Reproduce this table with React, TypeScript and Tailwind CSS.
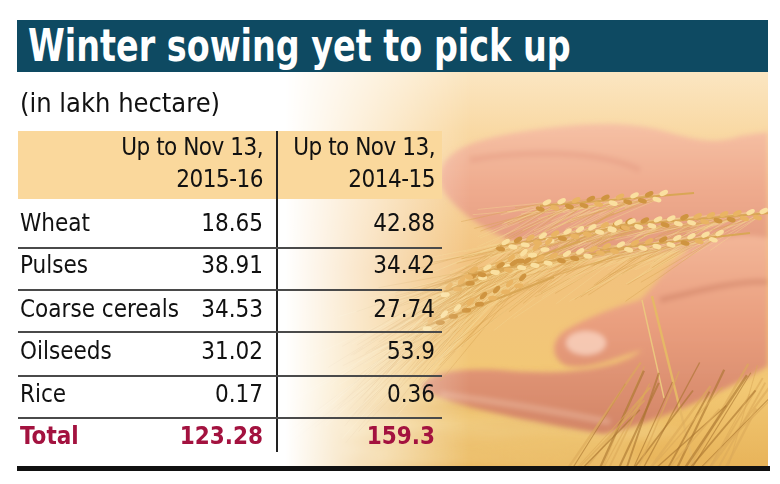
import React from 'react';

type Row = { crop: string; now: string; prev: string; h: string; pb: string };

const ROWS: Row[] = [
  { crop: 'Wheat', now: '18.65', prev: '42.88', h: 'h-[48px]', pb: 'pb-0' },
  { crop: 'Pulses', now: '38.91', prev: '34.42', h: 'h-[42px]', pb: 'pb-2' },
  { crop: 'Coarse cereals', now: '34.53', prev: '27.74', h: 'h-[42px]', pb: 'pb-1' },
  { crop: 'Oilseeds', now: '31.02', prev: '53.9', h: 'h-[44px]', pb: 'pb-[6px]' },
  { crop: 'Rice', now: '0.17', prev: '0.36', h: 'h-[42px]', pb: 'pb-[6px]' },
];

// small deterministic random so the wheat looks the same every run
function makeRand(seed: number) {
  let s = seed;
  return () => {
    s = (s * 16807) % 2147483647;
    return (s - 1) / 2147483646;
  };
}

type Ear = { tx: number; ty: number; bx: number; by: number; n: number; awn: number };

const EARS: Ear[] = [
  { tx: 500, ty: 246, bx: 630, by: 224, n: 22, awn: 90 },
  { tx: 612, ty: 226, bx: 764, by: 214, n: 24, awn: 70 },
  { tx: 444, ty: 292, bx: 550, by: 244, n: 18, awn: 130 },
  { tx: 426, ty: 326, bx: 524, by: 280, n: 16, awn: 140 },
  { tx: 468, ty: 274, bx: 594, by: 252, n: 20, awn: 120 },
  { tx: 540, ty: 206, bx: 664, by: 196, n: 18, awn: 80 },
  { tx: 600, ty: 250, bx: 720, by: 236, n: 18, awn: 90 },
];

function WheatPhoto() {
  const rnd = makeRand(11);
  const grains: React.ReactNode[] = [];
  const awns: React.ReactNode[] = [];

  EARS.forEach((e, ei) => {
    const dx = e.bx - e.tx;
    const dy = e.by - e.ty;
    const len = Math.hypot(dx, dy);
    const ux = dx / len;
    const uy = dy / len;
    const ang = (Math.atan2(dy, dx) * 180) / Math.PI;
    grains.push(
      <line key={`st${ei}`} x1={e.tx} y1={e.ty} x2={e.bx + 30} y2={e.by - 3} stroke="#d9a655" strokeWidth={2} />,
    );
    for (let i = 0; i < e.n; i++) {
      const t = i / (e.n - 1);
      const side = i % 2 === 0 ? 1 : -1;
      const cx = e.tx + dx * t - uy * side * 3;
      const cy = e.ty + dy * t + ux * side * 3;
      // awns run towards the lower left, away from the stalk
      for (let k = 0; k < 4; k++) {
        const l = e.awn * (0.4 + rnd() * 0.8);
        const spread = (rnd() - 0.5) * 0.6;
        const ax = cx - (ux * Math.cos(spread) - uy * Math.sin(spread)) * l;
        const ay = cy - (uy * Math.cos(spread) + ux * Math.sin(spread)) * l + l * 0.3;
        awns.push(
          <line
            key={`a${ei}-${i}-${k}`}
            x1={cx}
            y1={cy}
            x2={ax}
            y2={ay}
            stroke={rnd() > 0.45 ? '#f3d592' : '#d8a454'}
            strokeWidth={0.6}
            opacity={0.75}
          />,
        );
      }
      const tone = rnd();
      const fill = tone > 0.6 ? '#fae0a0' : tone > 0.3 ? '#e9b463' : '#cf943f';
      grains.push(
        <ellipse
          key={`g${ei}-${i}`}
          cx={cx}
          cy={cy}
          rx={4.6}
          ry={2.4}
          fill={fill}
          transform={`rotate(${ang + side * 22} ${cx} ${cy})`}
        />,
      );
    }
  });

  const straws: React.ReactNode[] = [];
  for (let i = 0; i < 34; i++) {
    const x = 620 + rnd() * 160;
    const top = 360 + rnd() * 50;
    straws.push(
      <line
        key={`s${i}`}
        x1={x}
        y1={top}
        x2={x - 30 - rnd() * 50}
        y2={470}
        stroke={rnd() > 0.5 ? '#a8732e' : '#dcaa5a'}
        strokeWidth={1 + rnd() * 1.5}
        opacity={0.6}
      />,
    );
  }
  const lowStraw: React.ReactNode[] = [];
  for (let i = 0; i < 30; i++) {
    const y = 380 + rnd() * 80;
    lowStraw.push(
      <line
        key={`l${i}`}
        x1={340 + rnd() * 60}
        y1={y}
        x2={620 + rnd() * 60}
        y2={y - 30 + rnd() * 40}
        stroke={rnd() > 0.5 ? '#f5d894' : '#e3b160'}
        strokeWidth={2 + rnd() * 3}
        opacity={0.5}
      />,
    );
  }

  return (
    <svg className="absolute inset-0 h-full w-full" viewBox="17 72 751 394" preserveAspectRatio="none">
      <defs>
        <linearGradient id="sky" x1="0" y1="72" x2="0" y2="466" gradientUnits="userSpaceOnUse">
          <stop offset="0" stopColor="#fbe6c2" />
          <stop offset="0.15" stopColor="#f9d9a4" />
          <stop offset="0.5" stopColor="#f2c27e" />
          <stop offset="0.8" stopColor="#f2c874" />
          <stop offset="1" stopColor="#e8b45a" />
        </linearGradient>
        <linearGradient id="fade" x1="285" y1="0" x2="470" y2="0" gradientUnits="userSpaceOnUse">
          <stop offset="0" stopColor="#000" />
          <stop offset="1" stopColor="#fff" />
        </linearGradient>
        <mask id="photoMask" maskUnits="userSpaceOnUse" x="17" y="72" width="751" height="394">
          <rect x="17" y="72" width="751" height="394" fill="url(#fade)" />
        </mask>
        <linearGradient id="handTop" x1="0" y1="120" x2="0" y2="255" gradientUnits="userSpaceOnUse">
          <stop offset="0" stopColor="#f6c2a6" />
          <stop offset="0.5" stopColor="#efab8e" />
          <stop offset="1" stopColor="#e29a7e" />
        </linearGradient>
        <linearGradient id="handLow" x1="0" y1="235" x2="0" y2="435" gradientUnits="userSpaceOnUse">
          <stop offset="0" stopColor="#f3b698" />
          <stop offset="0.45" stopColor="#e99e7e" />
          <stop offset="1" stopColor="#d28466" />
        </linearGradient>
        <filter id="soft">
          <feGaussianBlur stdDeviation="2.5" />
        </filter>
        <filter id="blurMore">
          <feGaussianBlur stdDeviation="5" />
        </filter>
        <filter id="tiny">
          <feGaussianBlur stdDeviation="0.45" />
        </filter>
      </defs>
      <g mask="url(#photoMask)">
        <rect x="17" y="72" width="751" height="394" fill="url(#sky)" />
        <g filter="url(#blurMore)">{lowStraw}</g>
        <g filter="url(#soft)">
          <path
            d="M440 178 C440 152 470 140 520 132 C570 124 620 120 660 130 C690 138 712 146 740 136 L768 132 L768 252 C720 246 660 250 600 256 C540 260 482 232 456 206 C446 196 440 188 440 178 Z"
            fill="url(#handTop)"
          />
          <path
            d="M768 238 C740 232 702 238 682 255 C662 272 652 290 640 300 C618 306 590 316 566 330 C550 340 550 360 568 366 C592 370 620 356 642 350 C618 370 560 376 500 370 C460 368 430 372 420 386 C432 402 520 420 604 434 C664 420 722 392 768 366 Z"
            fill="url(#handLow)"
          />
          <ellipse cx="586" cy="343" rx="20" ry="12" fill="#f8d0bc" opacity="0.85" />
          <path d="M470 160 C520 150 600 150 640 170" stroke="#e39a82" strokeWidth="6" fill="none" opacity="0.5" />
          <path d="M660 300 C700 290 740 280 768 282" stroke="#c97a60" strokeWidth="6" fill="none" opacity="0.45" />
          <path d="M440 394 C500 402 560 412 610 422" stroke="#f3c8b0" strokeWidth="6" fill="none" opacity="0.4" />
        </g>
        <g filter="url(#tiny)">
          {awns}
          {grains}
        </g>
        <line x1="652" y1="296" x2="694" y2="466" stroke="#e6b866" strokeWidth="2.4" />
        <line x1="642" y1="300" x2="664" y2="398" stroke="#ecc77e" strokeWidth="1.4" />
        {straws}
      </g>
    </svg>
  );
}

export default function App() {
  const font = "font-['DejaVu_Sans_Condensed','Liberation_Sans',sans-serif]";
  return (
    <div className={`h-[484px] w-[780px] bg-white pl-[17px] pt-[20px] ${font}`}>
      <div className="w-[753px]">
        <div className="flex h-[52px] w-[751px] items-center bg-[#0e4a62] pl-[11px]">
          <h1 className="origin-left scale-x-[0.844] whitespace-nowrap text-[44px] font-bold leading-none text-white">
            Winter sowing yet to pick up
          </h1>
        </div>

        <div className="relative h-[394px] w-[751px]">
          <WheatPhoto />
          <div className="relative z-10">
            <p className="pl-[3px] pt-[16px] text-[27px] leading-[30px] text-[#111]">(in lakh hectare)</p>

            <div className="ml-[1px] mt-[13px] w-[424px] text-[24px] leading-none text-[#111]">
              <div className="grid h-[68px] grid-cols-[260px_164px] bg-[#fad89c] text-[24px] leading-[32px] tracking-[-0.5px]">
                <div className="border-r-2 border-[#222] pr-[13px] text-right">
                  Up to Nov 13,
                  <br />
                  2015-16
                </div>
                <div className="pr-[7px] text-right">
                  Up to Nov 13,
                  <br />
                  2014-15
                </div>
              </div>

              {ROWS.map((r, i) => (
                <div
                  key={r.crop}
                  className={`grid grid-cols-[260px_164px] ${r.h} ${i > 0 ? 'border-t-2 border-[#4a4a4a]' : ''}`}
                >
                  <div className={`flex items-center justify-between border-r-2 border-[#222] pl-[2px] pr-[13px] ${r.pb}`}>
                    <span>{r.crop}</span>
                    <span>{r.now}</span>
                  </div>
                  <div className={`flex items-center justify-end pr-[7px] ${r.pb}`}>{r.prev}</div>
                </div>
              ))}

              <div className="grid h-[35px] grid-cols-[260px_164px] border-t-2 border-[#4a4a4a] font-bold text-[#a3123f]">
                <div className="flex items-center justify-between border-r-2 border-[#222] pl-[2px] pr-[13px]">
                  <span>Total</span>
                  <span>123.28</span>
                </div>
                <div className="flex items-center justify-end pr-[7px]">159.3</div>
              </div>
            </div>
          </div>
        </div>

        <div className="h-[5px] w-[753px] bg-[#111]" />
      </div>
    </div>
  );
}
